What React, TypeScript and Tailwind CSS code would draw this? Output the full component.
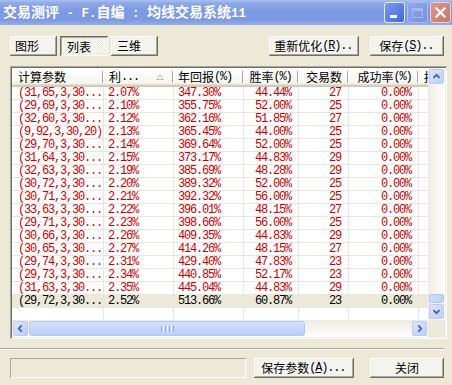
import React from "react";

const ASC = "font-['Liberation_Mono',monospace] tracking-[-1.2px]";
const ASCH = "font-['Liberation_Mono',monospace] tracking-[-1.2px] pr-[1.5px]";
const CJK = "font-['Noto_Sans_CJK_SC',sans-serif]";

function M({ s }: { s: string }) {
  const parts = s.match(/[\x00-\x7F]+|[^\x00-\x7F]+/g) || [];
  return (
    <>
      {parts.map((p, i) =>
        /^[\x00-\x7F]/.test(p) ? (
          <span key={i} className={ASCH}>
            {p}
          </span>
        ) : (
          <span key={i} className={CJK}>
            {p}
          </span>
        )
      )}
    </>
  );
}

const BTN =
  "h-[20px] flex items-center bg-[#F4F3EE] shadow-[inset_-1px_-1px_#716F64,inset_1px_1px_#FFFFFF,inset_-2px_-2px_#ACA899,inset_2px_2px_#F1EFE2] text-[12px] leading-[14px] text-black whitespace-pre";

const BODY_COLS = [
  "w-[92px] pl-[6px] justify-start",
  "w-[70px] pl-[4px] justify-start",
  "w-[70px] pl-[4px] justify-start",
  "w-[55px] pr-[7px] justify-end",
  "w-[50px] pr-[7px] justify-end",
  "w-[70px] pr-[7px] justify-end",
  "w-[80px] pl-[5px] justify-start",
];

const HEAD_W = ["w-[92px]", "w-[70px]", "w-[70px]", "w-[55px]", "w-[50px]", "w-[70px]", "w-[80px]"];
const HEAD_IN = [
  "pl-[6px] justify-start",
  "pl-[5px] justify-between pr-[8px]",
  "pl-[4px] justify-start",
  "pr-[4px] justify-end",
  "pr-[5px] justify-end",
  "pr-[4px] justify-end",
  "pl-[5px] justify-start",
];
const HEADS = ["计算参数", "利...", "年回报(%)", "胜率(%)", "交易数", "成功率(%)", "损失..."];

const ROWS: string[][] = [
  ["(31,65,3,30...", "2.07%", "347.30%", "44.44%", "27", "0.00%"],
  ["(29,69,3,30...", "2.10%", "355.75%", "52.00%", "25", "0.00%"],
  ["(32,60,3,30...", "2.12%", "362.16%", "51.85%", "27", "0.00%"],
  ["(9,92,3,30,20)", "2.13%", "365.45%", "44.00%", "25", "0.00%"],
  ["(29,70,3,30...", "2.14%", "369.64%", "52.00%", "25", "0.00%"],
  ["(31,64,3,30...", "2.15%", "373.17%", "44.83%", "29", "0.00%"],
  ["(32,63,3,30...", "2.19%", "385.69%", "48.28%", "29", "0.00%"],
  ["(30,72,3,30...", "2.20%", "389.32%", "52.00%", "25", "0.00%"],
  ["(30,71,3,30...", "2.21%", "392.32%", "56.00%", "25", "0.00%"],
  ["(33,63,3,30...", "2.22%", "396.01%", "48.15%", "27", "0.00%"],
  ["(29,71,3,30...", "2.23%", "398.66%", "56.00%", "25", "0.00%"],
  ["(30,66,3,30...", "2.26%", "409.35%", "44.83%", "29", "0.00%"],
  ["(30,65,3,30...", "2.27%", "414.26%", "48.15%", "27", "0.00%"],
  ["(29,74,3,30...", "2.31%", "429.40%", "47.83%", "23", "0.00%"],
  ["(29,73,3,30...", "2.34%", "440.85%", "52.17%", "23", "0.00%"],
  ["(31,63,3,30...", "2.35%", "445.04%", "44.83%", "29", "0.00%"],
  ["(29,72,3,30...", "2.52%", "513.66%", "60.87%", "23", "0.00%"],
];

function TitleBar() {
  return (
    <div className="h-[25px] shrink-0 flex items-center pl-[3px] pr-[1px] bg-[linear-gradient(to_bottom,#AAC0F0_0%,#8DA8E8_14%,#7E9AE1_40%,#7C98E0_78%,#94AEEA_100%)]">
      <div className="text-white font-bold whitespace-pre leading-[16px] mb-[1px]">
        <span className="font-['Noto_Sans_CJK_SC',sans-serif] text-[14px]">交易测评</span>
        <span className="font-['Liberation_Mono',monospace] text-[12.5px]"> - F.</span>
        <span className="font-['Noto_Sans_CJK_SC',sans-serif] text-[14px]">自编</span>
        <span className="font-['Liberation_Mono',monospace] text-[12.5px]"> : </span>
        <span className="font-['Noto_Sans_CJK_SC',sans-serif] text-[14px]">均线交易系统</span>
        <span className="font-['Liberation_Mono',monospace] text-[12.5px]">11</span>
      </div>
      <div className="ml-auto flex items-center gap-[2px]">
        <div className="w-[21px] h-[21px] rounded-[3px] border border-[#E6ECFB] bg-[linear-gradient(135deg,#7C9CF0,#3E66DA)] flex items-end pl-[5px] pb-[4px]">
          <div className="w-[7px] h-[3px] bg-white" />
        </div>
        <div className="w-[21px] h-[21px] rounded-[3px] border border-[#A9BCEE] bg-[linear-gradient(135deg,#8EA8EA,#7792E0)] flex items-center justify-center">
          <div className="w-[11px] h-[10px] border border-t-[3px] border-[#A6B8EC]" />
        </div>
        <div className="w-[21px] h-[21px] rounded-[3px] border border-[#E9D3D0] bg-[linear-gradient(135deg,#DA9A90,#C7766A)] flex items-center justify-center">
          <svg width="11" height="11" viewBox="0 0 11 11">
            <path d="M1.5 1.5 L9.5 9.5 M9.5 1.5 L1.5 9.5" stroke="#FFFFFF" strokeWidth="2.2" strokeLinecap="square" />
          </svg>
        </div>
      </div>
    </div>
  );
}

function Arrow({ dir }: { dir: "up" | "down" | "left" | "right" }) {
  const d =
    dir === "up"
      ? "M4 9 L7.5 5.5 L11 9"
      : dir === "down"
      ? "M4 6 L7.5 9.5 L11 6"
      : dir === "left"
      ? "M9 4 L5.5 7.5 L9 11"
      : "M6 4 L9.5 7.5 L6 11";
  return (
    <div className="w-[17px] h-[17px] shrink-0 p-[1px]">
      <div className="w-full h-full rounded-[2px] border border-[#B9CCF5] bg-[linear-gradient(135deg,#DCE6FE,#BACEF9)] flex items-center justify-center">
        <svg width="15" height="15" viewBox="0 0 15 15">
          <path d={d} stroke="#4D6185" strokeWidth="2" fill="none" />
        </svg>
      </div>
    </div>
  );
}

function Header() {
  return (
    <div className="h-[19px] shrink-0 flex bg-[linear-gradient(to_bottom,#FFFFFF,#F3F2EB)] shadow-[inset_0_-1px_#CBC7B8,inset_0_-2px_#D6D2C2,inset_0_-3px_#E2DECD]">
      {HEADS.map((h, i) => (
        <div key={i} className={`${HEAD_W[i]} shrink-0 flex items-start h-[19px]`}>
          <div
            className={`flex-1 h-[19px] pb-[1px] flex items-center whitespace-pre leading-[18px] ${
              i === 6 ? "overflow-hidden" : ""
            } ${HEAD_IN[i]}`}
          >
            <M s={h} />
            {i === 1 && (
              <svg width="8" height="6" viewBox="0 0 8 6" className="ml-auto">
                <path d="M4 0.5 L7.5 5.5 L0.5 5.5 Z" fill="none" stroke="#C4C0B2" strokeWidth="1" />
              </svg>
            )}
          </div>
          <div className="w-[2px] h-[12px] mt-[3px] border-l border-r border-l-[#ACA899] border-r-white" />
        </div>
      ))}
    </div>
  );
}

function Row({ r, sel }: { r: string[]; sel?: boolean }) {
  return (
    <div
      className={`h-[13px] shrink-0 flex border-b border-[#E8E6DE] ${
        sel ? "bg-[#ECE9D8] text-black" : "text-[#CC0000]"
      }`}
    >
      {BODY_COLS.map((c, i) => (
        <div
          key={i}
          className={`${c} shrink-0 h-full flex items-center border-r border-[#E8E6DE] leading-[12px] whitespace-pre`}
        >
          {r[i] ? <span className={ASC}>{r[i]}</span> : null}
        </div>
      ))}
    </div>
  );
}

function ListView() {
  return (
    <div className="mt-[10px] h-[273px] w-[437px] p-[2px] shadow-[inset_1px_1px_#ACA899,inset_-1px_-1px_#FFFFFF,inset_2px_2px_#716F64,inset_-2px_-2px_#F1EFE2]">
      <div className="h-full grid grid-cols-[1fr_17px] grid-rows-[1fr_17px] bg-white">
        <div className="overflow-hidden flex flex-col text-[12px]">
          <Header />
          {ROWS.map((r, i) => (
            <Row key={i} r={r} sel={i === ROWS.length - 1} />
          ))}
          <Row r={[]} />
        </div>
        <div className="flex flex-col bg-[linear-gradient(to_right,#EEEDE5,#FDFDFA)]">
          <Arrow dir="up" />
          <div className="flex-1 flex flex-col justify-end px-[1px]">
            <div className="h-[9px] rounded-[2px] border border-[#B3C6F1] bg-[linear-gradient(to_right,#CFDDFD,#BDD0F9)]" />
          </div>
          <Arrow dir="down" />
        </div>
        <div className="flex bg-[linear-gradient(to_bottom,#EEEDE5,#FDFDFA)]">
          <Arrow dir="left" />
          <div className="w-[276px] shrink-0 py-[1px]">
            <div className="h-full rounded-[3px] border border-[#B3C6F1] bg-[linear-gradient(to_bottom,#D3E0FD,#BCCFF9)] flex items-center justify-center gap-[1px]">
              <div className="w-[1px] h-[6px] bg-[#8FA8E6]" />
              <div className="w-[1px] h-[6px] bg-[#EEF3FE]" />
              <div className="w-[1px] h-[6px] bg-[#8FA8E6]" />
              <div className="w-[1px] h-[6px] bg-[#EEF3FE]" />
              <div className="w-[1px] h-[6px] bg-[#8FA8E6]" />
              <div className="w-[1px] h-[6px] bg-[#EEF3FE]" />
              <div className="w-[1px] h-[6px] bg-[#8FA8E6]" />
            </div>
          </div>
          <div className="flex-1" />
          <Arrow dir="right" />
        </div>
        <div className="bg-[#ECE9D8]" />
      </div>
    </div>
  );
}

export default function App() {
  return (
    <div className="w-[452px] h-[385px] bg-[#ECE9D8] flex flex-col text-black text-[12px] leading-[12px] overflow-hidden select-none">
      <TitleBar />
      <div className="flex flex-col pl-[10px] pr-[5px]">
        <div className="mt-[11px] h-[20px] flex pr-[3px]">
          <div className={`${BTN} w-[47px] pl-[5px]`}>
            <span className={CJK}>图形</span>
          </div>
          <div className="ml-[3px] w-[48px] h-[20px] flex items-center pl-[7px] pt-[1px] bg-[image:repeating-conic-gradient(#FFFFFF_0_25%,#ECE9D8_0_50%)] bg-[length:2px_2px] shadow-[inset_1px_1px_#716F64,inset_-1px_-1px_#FFFFFF,inset_2px_2px_#ACA899,inset_-2px_-2px_#F1EFE2] text-[12px] leading-[14px]">
            <span className={CJK}>列表</span>
          </div>
          <div className={`${BTN} ml-[3px] w-[47px] pl-[6px]`}>
            <span className={CJK}>三维</span>
          </div>
          <div className={`${BTN} ml-auto w-[90px] justify-center`}>
            <span className={CJK}>重新优化</span>
            <span className={ASCH}>
              (<span className="underline underline-offset-[1px]">R</span>)..
            </span>
          </div>
          <div className={`${BTN} ml-[11px] w-[74px] justify-center`}>
            <span className={CJK}>保存</span>
            <span className={ASCH}>
              (<span className="underline underline-offset-[1px]">S</span>)..
            </span>
          </div>
        </div>
        <ListView />
      </div>
      <div className="mt-[9px] w-[444px] h-[2px] border-t border-b border-t-[#ACA899] border-b-white" />
      <div className="mt-[8px] h-[20px] flex pl-[10px]">
        <div className="w-[236px] h-[20px] shadow-[inset_1px_1px_#ACA899,inset_-1px_-1px_#FFFFFF]" />
        <div className={`${BTN} ml-[8px] w-[100px] justify-center`}>
          <span className={CJK}>保存参数</span>
          <span className={ASCH}>
            (<span className="underline underline-offset-[1px]">A</span>)...
          </span>
        </div>
        <div className={`${BTN} ml-[16px] w-[74px] justify-center`}>
          <span className={CJK}>关闭</span>
        </div>
      </div>
    </div>
  );
}
